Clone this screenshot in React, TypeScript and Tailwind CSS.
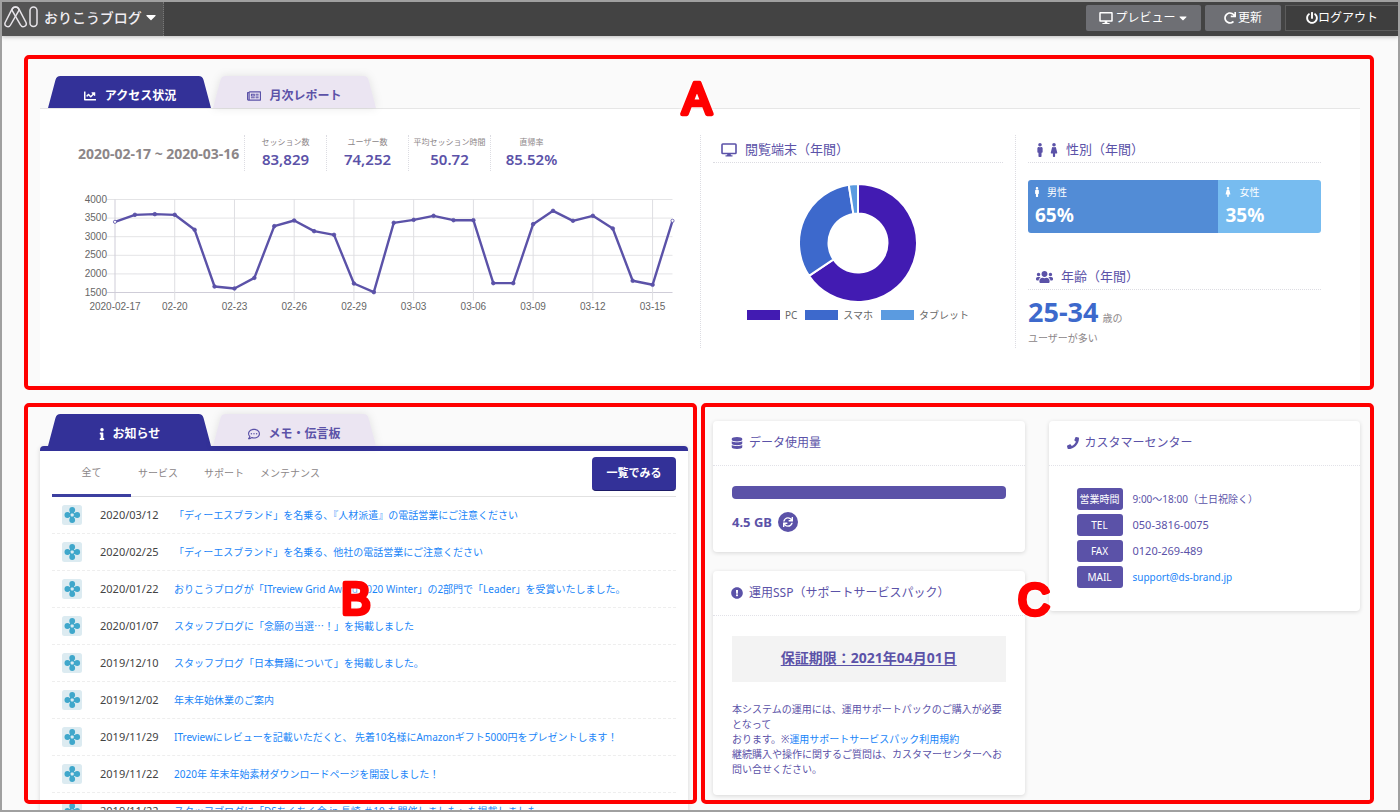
import React from "react";
import {
  FaChartLine,
  FaDatabase,
  FaDesktop,
  FaExclamationCircle,
  FaFemale,
  FaInfo,
  FaMale,
  FaPhone,
  FaPowerOff,
  FaRedo,
  FaRegCommentDots,
  FaRegNewspaper,
  FaSync,
  FaUsers,
  FaCaretDown,
} from "react-icons/fa";

const sessions = [
  3400, 3588, 3606, 3588, 3185, 1661, 1608, 1894, 3283, 3435, 3149, 3050, 1742, 1509, 3373, 3453, 3561, 3444, 3444,
  1751, 1751, 3337, 3695, 3427, 3561, 3221, 1815, 1707, 3428,
];

const dateTicks = [
  "2020-02-17", "02-20", "02-23", "02-26", "02-29", "03-03", "03-06", "03-09", "03-12", "03-15",
];

const stats = [
  { label: "セッション数", value: "83,829" },
  { label: "ユーザー数", value: "74,252" },
  { label: "平均セッション時間", value: "50.72" },
  { label: "直帰率", value: "85.52%" },
];

const devices = [
  { label: "PC", share: 65.6, fill: "#421bb2", swatch: "bg-[#421bb2]" },
  { label: "スマホ", share: 31.9, fill: "#3d69cc", swatch: "bg-[#3d69cc]" },
  { label: "タブレット", share: 2.5, fill: "#5b9be0", swatch: "bg-[#5b9be0]" },
];

const news: { date: string; title: React.ReactNode }[] = [
  { date: "2020/03/12", title: "「ディーエスブランド」を名乗る、『人材派遣』の電話営業にご注意ください" },
  { date: "2020/02/25", title: "「ディーエスブランド」を名乗る、他社の電話営業にご注意ください" },
  {
    date: "2020/01/22",
    title: "おりこうブログが「ITreview Grid Award 2020 Winter」の2部門で「Leader」を受賞いたしました。",
  },
  {
    date: "2020/01/07",
    title: (
      <>
        スタッフブログに「念願の当選<span className="font-['Noto_Sans_CJK_JP',sans-serif]">…</span>！」を掲載しました
      </>
    ),
  },
  { date: "2019/12/10", title: "スタッフブログ「日本舞踊について」を掲載しました。" },
  { date: "2019/12/02", title: "年末年始休業のご案内" },
  {
    date: "2019/11/29",
    title: "ITreviewにレビューを記載いただくと、 先着10名様にAmazonギフト5000円をプレゼントします！",
  },
  { date: "2019/11/22", title: "2020年 年末年始素材ダウンロードページを開設しました！" },
  { date: "2019/11/22", title: "スタッフブログに「DSちくちく会 in 長崎 ＃10 を開催しました」を掲載しました" },
];

function Frame({ letter, place }: { letter: string; place: string }) {
  return (
    <div className="pointer-events-none absolute inset-0 z-10 rounded-[5px] border-4 border-[#ff0000]">
      <svg viewBox="0 0 40 44" className={`absolute h-11 w-10 overflow-visible drop-shadow-[0_0_2px_#ffffff] ${place}`}>
        <text
          x="20"
          y="37"
          textAnchor="middle"
          fontFamily="Liberation Sans, sans-serif"
          fontSize="44"
          fill="#ff0000"
          stroke="#ff0000"
          strokeWidth="4.5"
          strokeLinejoin="round"
        >
          {letter}
        </text>
      </svg>
    </div>
  );
}

function Tab({ active, icon, children }: { active?: boolean; icon: React.ReactNode; children: React.ReactNode }) {
  return (
    <button
      type="button"
      className={`relative flex h-8 w-[163px] items-center justify-center pt-2 text-[12px] font-bold ${
        active ? "text-white" : "text-[#5b52a8]"
      }`}
    >
      <svg
        viewBox="0 0 164 32"
        preserveAspectRatio="none"
        aria-hidden="true"
        className={`absolute inset-0 h-full w-full ${active ? "" : "drop-shadow-[0_0_4px_rgba(0,0,0,0.1)]"}`}
      >
        <path
          d="M0 32L7.5 4Q8.500 0 12.500 0H151.500Q155.500 0 156.500 4L164 32Z"
          fill={active ? "#333198" : "#ebe5f2"}
        />
      </svg>
      <span className="relative flex items-center gap-2">
        {icon}
        {children}
      </span>
    </button>
  );
}

function LineChart() {
  const left = 37;
  const right = 594.5;
  const top = 9.5;
  const bottom = 102.5;
  const step = (right - left) / (sessions.length - 1);
  const y = (v: number) => bottom - ((v - 1500) / 2500) * (bottom - top);
  const points = sessions.map((v, i) => [left + i * step, y(v)]);
  return (
    <svg viewBox="0 0 610 125" className="w-full" role="img" aria-label="セッション数の推移">
      {[4000, 3500, 3000, 2500, 2000, 1500].map((v) => (
        <g key={v}>
          <line x1={left - 8} x2={right} y1={y(v)} y2={y(v)} stroke={v === 1500 ? "#cfcdd8" : "#e4e4e6"} />
          <text x={left - 8} y={y(v) + 3} textAnchor="end" fill="#666" fontSize="10" fontFamily="Liberation Sans, sans-serif">
            {v}
          </text>
        </g>
      ))}
      {dateTicks.map((label, i) => (
        <g key={label}>
          <line
            x1={left + i * 3 * step}
            x2={left + i * 3 * step}
            y1={top}
            y2={bottom + 8}
            stroke={i === 0 ? "#cfcdd8" : "#dedee2"}
          />
          <text
            x={left + i * 3 * step}
            y={120}
            textAnchor="middle"
            fill="#666"
            fontSize="10"
            fontFamily="Liberation Sans, sans-serif"
          >
            {label}
          </text>
        </g>
      ))}
      <polyline
        points={points.map((p) => p.join(",")).join(" ")}
        fill="none"
        stroke="#5b52a8"
        strokeWidth="2.4"
        strokeLinejoin="round"
      />
      {points.map(([cx, cy], i) => (
        <circle
          key={i}
          cx={cx}
          cy={cy}
          r={i === 0 || i === points.length - 1 ? 1.6 : 1.8}
          fill={i === 0 || i === points.length - 1 ? "#fff" : "#5b52a8"}
          stroke="#5b52a8"
          strokeWidth="0.8"
        />
      ))}
    </svg>
  );
}

function Donut() {
  let start = 0;
  const at = (share: number, r: number) => {
    const a = (share / 100) * Math.PI * 2;
    return `${60 + r * Math.sin(a)} ${60 - r * Math.cos(a)}`;
  };
  return (
    <svg viewBox="0 0 120 120" className="mx-auto h-[120px] w-[120px]" role="img" aria-label="閲覧端末の割合">
      {devices.map((d) => {
        const from = start;
        const to = start + d.share;
        start = to;
        const large = d.share > 50 ? 1 : 0;
        return (
          <path
            key={d.label}
            d={`M${at(from, 59)}A59 59 0 ${large} 1 ${at(to, 59)}L${at(to, 29.5)}A29.5 29.5 0 ${large} 0 ${at(from, 29.5)}Z`}
            fill={d.fill}
            stroke="#fff"
            strokeWidth="2"
          />
        );
      })}
    </svg>
  );
}

function FlowerIcon() {
  return (
    <svg viewBox="0 0 20 20" className="h-5 w-5 shrink-0" aria-hidden="true">
      <rect width="20" height="20" rx="2.500" fill="#dcebf1" />
      <path d="M10 5V15M5 10H15" stroke="#3fa7cb" strokeWidth="4" />
      <g fill="#3fa7cb">
        <circle cx="10.200" cy="5" r="2.900" />
        <circle cx="10.200" cy="15" r="2.900" />
        <circle cx="5.400" cy="10" r="2.900" />
        <circle cx="15.200" cy="10" r="2.900" />
      </g>
      <rect x="8.700" y="8.500" width="3" height="3" rx="0.800" fill="#dcebf1" />
    </svg>
  );
}

function MonitorIcon() {
  return (
    <svg viewBox="0 0 16 14" className="h-3.5 w-4" aria-hidden="true">
      <rect x="1" y="1" width="14" height="9.500" rx="0.800" fill="none" stroke="#5b52a8" strokeWidth="1.600" />
      <path d="M6.500 10.500H9.500L10 12.200H11.500V13.500H4.500V12.200H6Z" fill="#5b52a8" />
    </svg>
  );
}

function PanelTitle({ icon, children }: { icon: React.ReactNode; children: React.ReactNode }) {
  return (
    <h2 className="flex h-7 items-center gap-2 border-b border-dotted border-[#dcdce2] px-2 pt-0.5 text-[13px] text-[#5b52a8]">
      {icon}
      {children}
    </h2>
  );
}

function Card({ icon, title, children }: { icon: React.ReactNode; title: string; children: React.ReactNode }) {
  return (
    <section className="rounded bg-white text-[#5b52a8] shadow-[0_1px_4px_rgba(0,0,0,0.14)]">
      <h2 className="flex h-[45px] items-center gap-1.5 border-b border-dotted border-[#e2e2e8] px-[18px] text-[12px]">
        {icon}
        {title}
      </h2>
      {children}
    </section>
  );
}

function ContactRow({ name, number, children }: { name: string; number?: boolean; children: React.ReactNode }) {
  return (
    <div className="flex items-center gap-2.5">
      <dt className="flex h-[22px] w-[46px] items-center justify-center rounded-[3px] bg-[#5b52a8] text-[10px] whitespace-nowrap text-white">
        {name}
      </dt>
      <dd className={number ? "text-[11px]" : "text-[10px]"}>{children}</dd>
    </div>
  );
}

export default function App() {
  return (
    <div
      lang="ja"
      className="flex h-screen flex-col overflow-hidden border-2 border-[#a0a0a0] bg-[#fafafa] font-['Noto_Sans','Noto_Sans_CJK_JP',sans-serif]"
    >
      <header className="flex h-[34px] shrink-0 items-stretch justify-between bg-[#434343] text-white shadow-[0_1px_4px_rgba(0,0,0,0.25)]">
        <button
          type="button"
          className="flex w-[162px] items-center border-r border-dotted border-[#777777] bg-[#545454] pb-1 pl-0.5 text-[14px] font-medium text-[#f0edf2]"
        >
          <svg viewBox="0 0 34 22" className="mr-1.5 h-[22px] w-[34px]" fill="none" stroke="#e8e5ea" strokeWidth="1.500" aria-hidden="true">
            <path d="M11.500 1C9.800 1 8.600 1.800 8 3.200L1.200 16.500C-0.300 20 4.500 22.500 6.500 19L14.500 5.200C15.800 2.800 13.800 1 11.500 1Z" />
            <path d="M11.500 1C13.200 1 14.400 1.800 15 3.200L22 16.500C23.500 20 18.500 22.500 16.600 19L8.500 5.200C7.200 2.800 9.200 1 11.500 1Z" />
            <rect x="26" y="1" width="7" height="19.500" rx="3.500" />
          </svg>
          おりこうブログ
          <FaCaretDown className="ml-0.5 h-4 w-3.5 text-white" />
        </button>
        <div className="flex items-center gap-1 pb-0.5 text-[12px]">
          <button type="button" className="flex h-[26px] w-[115px] items-center justify-center gap-0.5 rounded-xs bg-[#6e6f74]">
            <FaDesktop className="h-3 w-3.5" />
            プレビュー
            <FaCaretDown className="h-3 w-2.5" />
          </button>
          <button type="button" className="flex h-[26px] w-[76px] items-center justify-center gap-0.5 rounded-xs bg-[#6e6f74]">
            <FaRedo className="h-3 w-3" />
            更新
          </button>
          <button
            type="button"
            className="flex h-[26px] w-[113px] items-center justify-center border border-r-0 border-[#5c5c5c] bg-[#3e3e3e]"
          >
            <FaPowerOff className="h-3 w-3" />
            ログアウト
          </button>
        </div>
      </header>

      <main className="flex min-h-0 flex-1 flex-col gap-[13px] pt-[19px] pr-6 pb-1.5 pl-[22px]">
        <section className="relative shrink-0 pt-[21px] pr-3.5 pb-[7px] pl-4">
          <div className="flex gap-0.5 pl-2">
            <Tab active icon={<FaChartLine className="h-3 w-3.5" />}>
              アクセス状況
            </Tab>
            <Tab icon={<FaRegNewspaper className="h-3.5 w-3.5" />}>月次レポート</Tab>
          </div>
          <div className="grid grid-cols-[623fr_315fr_305fr] border-t border-[#e6e6e6] bg-white pt-[26px] pr-[39px] pb-[35px] pl-[38px]">
            <div className="border-r border-dotted border-[#dcdce2] pr-3">
              <div className="flex h-9 items-stretch">
                <p className="flex w-[166px] shrink-0 items-center text-[14px] font-bold whitespace-nowrap text-[#8c8688]">
                  2020-02-17 ~ 2020-03-16
                </p>
                <dl className="flex">
                  {stats.map((s) => (
                    <div key={s.label} className="w-[82px] border-l border-dotted border-[#dcdce2] text-center whitespace-nowrap">
                      <dt className="text-[8px] leading-[14px] text-[#8c8688]">{s.label}</dt>
                      <dd className="text-[15px] leading-5 font-semibold text-[#5b52a8]">{s.value}</dd>
                    </div>
                  ))}
                </dl>
              </div>
              <div className="mt-[19px]">
                <LineChart />
              </div>
            </div>

            <div className="border-r border-dotted border-[#dcdce2] px-3">
              <PanelTitle icon={<MonitorIcon />}>閲覧端末（年間）</PanelTitle>
              <div className="pt-5">
                <Donut />
              </div>
              <ul className="mt-0.5 flex justify-center gap-2 text-[10px] leading-5 whitespace-nowrap text-[#666666]">
                {devices.map((d) => (
                  <li key={d.label} className="flex items-center gap-[5px]">
                    <span className={`h-2.5 w-[33px] ${d.swatch}`} />
                    {d.label}
                  </li>
                ))}
              </ul>
            </div>

            <div className="pl-3">
              <PanelTitle
                icon={
                  <span className="flex gap-1.5">
                    <FaMale className="h-3.5 w-2" />
                    <FaFemale className="h-3.5 w-2" />
                  </span>
                }
              >
                性別（年間）
              </PanelTitle>
              <div className="mt-[17px] flex overflow-hidden rounded-[3px] text-white">
                <div className="h-[53px] w-[65%] bg-[#528cd6] px-[7px] pt-1">
                  <p className="flex items-center gap-2 text-[10px] leading-4">
                    <FaMale className="h-2.5 w-1" />
                    男性
                  </p>
                  <p className="text-[19px] leading-[30px] font-bold">65%</p>
                </div>
                <div className="h-[53px] w-[35%] bg-[#77bcf0] px-[7px] pt-1">
                  <p className="flex items-center gap-2 text-[10px] leading-4">
                    <FaFemale className="h-2.5 w-1.5" />
                    女性
                  </p>
                  <p className="text-[19px] leading-[30px] font-bold">35%</p>
                </div>
              </div>
              <div className="mt-[29px]">
                <PanelTitle icon={<FaUsers className="h-4 w-[17px]" />}>年齢（年間）</PanelTitle>
              </div>
              <p className="mt-1.5 text-[10px] leading-4 text-[#8c8688]">
                <strong className="mr-1 text-[27px] leading-8 text-[#3d69cc]">25-34</strong>
                歳の
              </p>
              <p className="text-[10px] leading-5 text-[#8c8688]">ユーザーが多い</p>
            </div>
          </div>
          <Frame letter="A" place="top-[18px] left-[649px]" />
        </section>

        <div className="grid min-h-0 flex-1 grid-cols-2 gap-1">
          <section className="relative min-h-0 pt-[11px] pr-[9px] pl-4">
            <div className="flex gap-0.5 pl-2">
              <Tab active icon={<FaInfo className="h-3 w-1.5" />}>
                お知らせ
              </Tab>
              <Tab icon={<FaRegCommentDots className="h-3 w-3" />}>メモ・伝言板</Tab>
            </div>
            <div className="rounded-t border-t-[5px] border-[#333198] bg-white px-3 shadow-[0_1px_5px_rgba(0,0,0,0.14)]">
              <div className="flex h-[46px] items-stretch justify-between border-b border-[#e2e2e2]">
                <div className="flex items-stretch text-[10px] whitespace-nowrap text-[#8c8688]">
                  <button type="button" className="-mb-px w-[79px] border-b-[3px] border-[#3c3fa0]">
                    全て
                  </button>
                  <div className="flex gap-3">
                    <button type="button" className="flex w-[54px] items-center justify-center">サービス</button>
                    <button type="button" className="flex w-[54px] items-center justify-center">サポート</button>
                    <button type="button" className="flex w-[54px] items-center justify-center">メンテナンス</button>
                  </div>
                </div>
                <button
                  type="button"
                  className="mt-1.5 h-[34px] w-[84px] rounded border-b border-[#1d1b66] bg-[#333198] text-[11px] font-bold text-white"
                >
                  一覧でみる
                </button>
              </div>
              <ul>
                {news.map((n, i) => (
                  <li key={i} className="flex h-[37px] items-center border-b border-dashed border-[#eeeeee] pl-2.5 whitespace-nowrap">
                    <FlowerIcon />
                    <time className="ml-[18px] w-[74px] text-[11px] text-[#444444]">{n.date}</time>
                    <a href="#news" className="text-[10px] text-[#1a85f8]">
                      {n.title}
                    </a>
                  </li>
                ))}
              </ul>
            </div>
            <Frame letter="B" place="top-[170px] left-[308px]" />
          </section>

          <section className="relative min-h-0 pt-[18px] pr-3.5 pl-3">
            <div className="grid grid-cols-2 items-start gap-6">
              <div className="flex flex-col gap-[19px]">
                <Card icon={<FaDatabase className="h-3 w-3" />} title="データ使用量">
                  <div className="px-[19px] pt-5 pb-5">
                    <div className="h-[13px] rounded bg-[#5b52a8]" />
                    <div className="mt-[13px] flex items-center gap-1.5">
                      <span className="text-[13px] leading-5 font-bold">4.5 GB</span>
                      <button
                        type="button"
                        aria-label="更新"
                        className="flex h-5 w-5 items-center justify-center rounded-full bg-[#5b52a8] text-white"
                      >
                        <FaSync className="h-2.5 w-2.5" />
                      </button>
                    </div>
                  </div>
                </Card>
                <Card icon={<FaExclamationCircle className="h-3 w-3" />} title="運用SSP（サポートサービスパック）">
                  <div className="px-[19px] pt-5 pb-[18px]">
                    <p className="flex h-[46px] items-center justify-center bg-[#f3f3f3] pb-1 text-[14px] font-bold whitespace-nowrap underline underline-offset-2">
                      保証期限：2021年04月01日
                    </p>
                    <p className="mt-5 text-[10px] leading-[15px]">
                      本システムの運用には、運用サポートパックのご購入が必要となって
                      <br />
                      おります。※
                      <a href="#terms" className="text-[#1a85f8]">
                        運用サポートサービスパック利用規約
                      </a>
                      <br />
                      継続購入や操作に関するご質問は、カスタマーセンターへお問い合せください。
                    </p>
                  </div>
                </Card>
              </div>
              <Card icon={<FaPhone className="h-3 w-3" />} title="カスタマーセンター">
                <dl className="flex flex-col gap-1 px-7 pt-[22px] pb-[23px]">
                  <ContactRow name="営業時間">9:00〜18:00（土日祝除く）</ContactRow>
                  <ContactRow name="TEL" number>
                    050-3816-0075
                  </ContactRow>
                  <ContactRow name="FAX" number>
                    0120-269-489
                  </ContactRow>
                  <ContactRow name="MAIL">
                    <a href="mailto:support@ds-brand.jp" className="text-[#1a85f8]">
                      support@ds-brand.jp
                    </a>
                  </ContactRow>
                </dl>
              </Card>
            </div>
            <Frame letter="C" place="top-[171px] left-[309px]" />
          </section>
        </div>
      </main>
    </div>
  );
}
